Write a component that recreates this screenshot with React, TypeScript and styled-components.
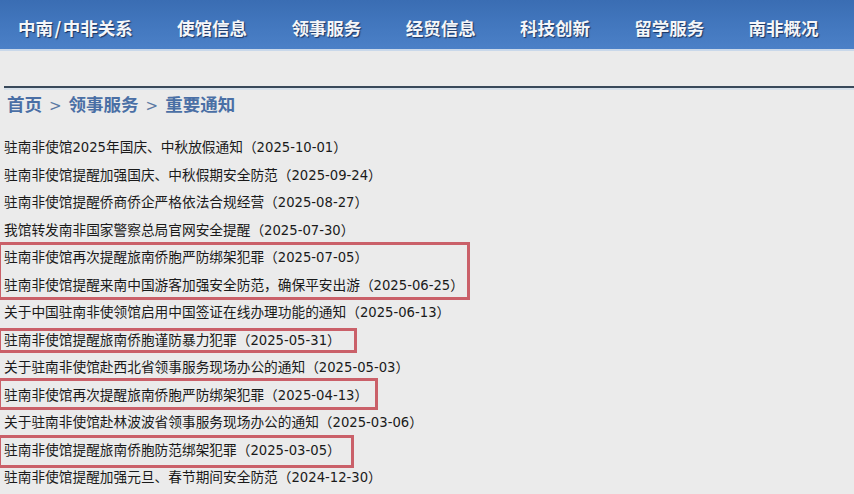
import React from "react";
import styled, { createGlobalStyle } from "styled-components";

const Global = createGlobalStyle`
  html, body { margin: 0; padding: 0; background: #ebebeb; }
  body { font-family: "Noto Sans CJK SC", "Noto Sans", sans-serif; overflow: hidden; }
`;

const Page = styled.div`
  width: 854px;
  height: 494px;
  background: #ebebeb;
  overflow: hidden;
`;

const NavBar = styled.nav`
  height: 51px;
  display: flex;
  align-items: center;
  gap: 44.3px;
  padding-left: 18px;
  background: linear-gradient(180deg, #3a6db3 0%, #4378bf 55%, #4b80c7 100%);
  border-bottom: 2px solid #c9d8ea;
  box-sizing: border-box;
`;

const NavItem = styled.span`
  font-family: "Noto Sans CJK SC", sans-serif;
  font-weight: 700;
  font-size: 17.5px;
  color: #f4f6f9;
  text-shadow: 1px 1px 1px rgba(20, 40, 80, 0.85);
  padding-top: 6px;
  white-space: nowrap;
`;

const Slash = styled.span`
  margin: 0 1.5px;
`;

const Rule = styled.div`
  margin: 35px 0 0 4px;
  border-top: 2px solid #39495a;
  border-bottom: 2px solid #d6e0ea;
`;

const Breadcrumb = styled.div`
  height: 28px;
  line-height: 28px;
  padding-left: 7px;
  font-size: 17.5px;
  font-weight: 700;
  color: #4a6fa5;
  white-space: nowrap;
`;

const Sep = styled.span`
  font-weight: 400;
  color: #5b79a3;
  margin: 0 7px;
  font-family: "DejaVu Sans", sans-serif;
  font-size: 15px;
`;

const List = styled.ul`
  list-style: none;
  margin: 15px 0 0 0;
  padding: 0 0 0 4px;
`;

const Item = styled.li`
  height: 27.5px;
  line-height: 27.5px;
  font-size: 13.7px;
  color: #1a1a1a;
  white-space: nowrap;
`;

const Num = styled.span`
  font-family: "DejaVu Sans", sans-serif;
  font-size: 13.2px;
`;

const Group = styled.div<{ $w: number; $t: number; $b: number }>`
  position: relative;
  &::after {
    content: "";
    position: absolute;
    left: -6px;
    top: ${(p) => p.$t}px;
    bottom: ${(p) => p.$b}px;
    width: ${(p) => p.$w}px;
    border: 3px solid rgba(196, 72, 82, 0.85);
    box-sizing: border-box;
    pointer-events: none;
  }
`;

const nav = ["使馆信息", "领事服务", "经贸信息", "科技创新", "留学服务", "南非概况"];

type Entry = { t: string; d: string };
const E = (t: string, d: string): Entry => ({ t, d });

const renderText = (s: string) =>
  s.split(/(\d+)/).map((part, i) => (/^\d+$/.test(part) ? <Num key={i}>{part}</Num> : part));

const Row = ({ e }: { e: Entry }) => (
  <Item>
    {renderText(e.t)}（<Num>{e.d}</Num>）
  </Item>
);

export default function App() {
  return (
    <Page>
      <Global />
      <NavBar>
        <NavItem>
          中南<Slash>/</Slash>中非关系
        </NavItem>
        {nav.map((n) => (
          <NavItem key={n}>{n}</NavItem>
        ))}
      </NavBar>
      <Rule />
      <Breadcrumb>
        首页<Sep>&gt;</Sep>领事服务<Sep>&gt;</Sep>重要通知
      </Breadcrumb>
      <List>
        <Row e={E("驻南非使馆2025年国庆、中秋放假通知", "2025-10-01")} />
        <Row e={E("驻南非使馆提醒加强国庆、中秋假期安全防范", "2025-09-24")} />
        <Row e={E("驻南非使馆提醒侨商侨企严格依法合规经营", "2025-08-27")} />
        <Row e={E("我馆转发南非国家警察总局官网安全提醒", "2025-07-30")} />
        <Group $w={472} $t={-1} $b={-2}>
          <Row e={E("驻南非使馆再次提醒旅南侨胞严防绑架犯罪", "2025-07-05")} />
          <Row e={E("驻南非使馆提醒来南中国游客加强安全防范，确保平安出游", "2025-06-25")} />
        </Group>
        <Row e={E("关于中国驻南非使领馆启用中国签证在线办理功能的通知", "2025-06-13")} />
        <Group $w={359} $t={2} $b={0}>
          <Row e={E("驻南非使馆提醒旅南侨胞谨防暴力犯罪", "2025-05-31")} />
        </Group>
        <Row e={E("关于驻南非使馆赴西北省领事服务现场办公的通知", "2025-05-03")} />
        <Group $w={380} $t={-3} $b={-2}>
          <Row e={E("驻南非使馆再次提醒旅南侨胞严防绑架犯罪", "2025-04-13")} />
        </Group>
        <Row e={E("关于驻南非使馆赴林波波省领事服务现场办公的通知", "2025-03-06")} />
        <Group $w={356} $t={-1} $b={-5}>
          <Row e={E("驻南非使馆提醒旅南侨胞防范绑架犯罪", "2025-03-05")} />
        </Group>
        <Row e={E("驻南非使馆提醒加强元旦、春节期间安全防范", "2024-12-30")} />
      </List>
    </Page>
  );
}
